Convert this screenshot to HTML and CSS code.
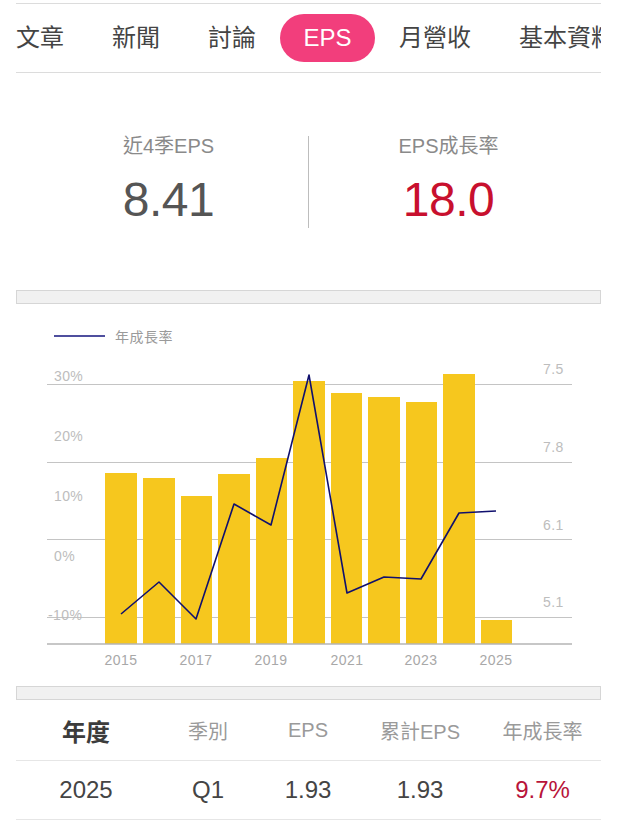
FILE: index.html
```html
<!DOCTYPE html>
<html lang="zh-Hant">
<head>
<meta charset="utf-8">
<title>EPS</title>
<link rel="stylesheet" href="styles.css">
</head>
<body>
<div class="page">
  <nav class="tabs">
    <div class="tab-track">
      <span class="tab">文章</span>
      <span class="tab">新聞</span>
      <span class="tab">討論</span>
      <span class="tab active">EPS</span>
      <span class="tab">月營收</span>
      <span class="tab">基本資料</span>
    </div>
  </nav>

  <section class="stats">
    <div class="stat">
      <div class="stat-label">近4季EPS</div>
      <div class="stat-value">8.41</div>
    </div>
    <div class="stat-divider"></div>
    <div class="stat">
      <div class="stat-label">EPS成長率</div>
      <div class="stat-value up">18.0</div>
    </div>
  </section>

  <div class="band"></div>

  <div class="chart">
    <svg width="585" height="382" viewBox="16 305 585 382" xmlns="http://www.w3.org/2000/svg">
      <g class="legend">
        <line x1="54" y1="337" x2="105" y2="337" stroke="#14147e" stroke-width="1.6"/>
        <text x="115" y="343" class="legend-text">年成長率</text>
      </g>
      <g stroke="#c4c4c4" stroke-width="1">
        <line x1="47" y1="385.5" x2="572" y2="385.5"/>
        <line x1="47" y1="463.5" x2="572" y2="463.5"/>
        <line x1="47" y1="540.5" x2="572" y2="540.5"/>
        <line x1="47" y1="618.5" x2="572" y2="618.5"/>
      </g>
      <g fill="#f6c71e">
        <rect x="105" y="474" width="32" height="171"/>
        <rect x="143" y="479" width="32" height="166"/>
        <rect x="181" y="497" width="31" height="148"/>
        <rect x="218" y="475" width="32" height="170"/>
        <rect x="256" y="459" width="31" height="186"/>
        <rect x="293" y="382" width="32" height="263"/>
        <rect x="331" y="394" width="31" height="251"/>
        <rect x="368" y="398" width="32" height="247"/>
        <rect x="406" y="403" width="31" height="242"/>
        <rect x="443" y="375" width="32" height="270"/>
        <rect x="481" y="621" width="31" height="24"/>
      </g>
      <line x1="47" y1="645" x2="572" y2="645" stroke="#b4b4b4" stroke-width="1.5"/>
      <polyline fill="none" stroke="#10106e" stroke-width="1.6" stroke-linejoin="round"
        points="121,615 159,583 196,620 234,505 271,526 309,376 347,594 384,578 421,580 459,514 496,512"/>
      <g class="axis-y">
        <text x="54" y="382">30%</text>
        <text x="54" y="442">20%</text>
        <text x="54" y="502">10%</text>
        <text x="54" y="562">0%</text>
        <text x="48" y="621">-10%</text>
      </g>
      <g class="axis-y">
        <text x="543" y="375">7.5</text>
        <text x="543" y="453">7.8</text>
        <text x="543" y="531">6.1</text>
        <text x="543" y="608">5.1</text>
      </g>
      <g class="axis-x">
        <text x="121" y="666">2015</text>
        <text x="196" y="666">2017</text>
        <text x="271" y="666">2019</text>
        <text x="347" y="666">2021</text>
        <text x="421" y="666">2023</text>
        <text x="496" y="666">2025</text>
      </g>
    </svg>
  </div>

  <div class="band"></div>

  <div class="table">
    <div class="trow thead">
      <div class="cell strong">年度</div>
      <div class="cell">季別</div>
      <div class="cell">EPS</div>
      <div class="cell">累計EPS</div>
      <div class="cell">年成長率</div>
    </div>
    <div class="trow tbody">
      <div class="cell">2025</div>
      <div class="cell">Q1</div>
      <div class="cell">1.93</div>
      <div class="cell">1.93</div>
      <div class="cell up">9.7%</div>
    </div>
  </div>
</div>
</body>
</html>
```

FILE: styles.css
```css
html, body {
  margin: 0;
  padding: 0;
  background: #ffffff;
}

body {
  font-family: "Liberation Sans", "Noto Sans CJK TC", sans-serif;
  color: #444;
}

.page {
  width: 585px;
  margin-left: 16px;
}

/* tabs */
.tabs {
  margin-top: 3px;
  border-top: 1px solid #dcdcdc;
  border-bottom: 1px solid #dcdcdc;
  padding: 10px 0;
  overflow: hidden;
}

.tab-track {
  display: flex;
  margin-left: -24px;
  white-space: nowrap;
}

.tab {
  flex-shrink: 0;
  height: 48px;
  line-height: 48px;
  padding: 0 24px;
  font-size: 24px;
  color: #444;
  border-radius: 24px;
}

.tab.active {
  background: #f23e7c;
  color: #ffffff;
  padding: 0 23.5px;
}

/* stats */
.stats {
  display: grid;
  grid-template-columns: 1fr 1px 1fr;
  padding: 61px 13px 62px;
}

.stat {
  text-align: center;
}

.stat-label {
  font-size: 20px;
  line-height: 24px;
  color: #8a8a8a;
}

.stat-value {
  margin-top: 14px;
  font-size: 48px;
  line-height: 56px;
  color: #555;
  letter-spacing: -0.5px;
}

.stat-value.up {
  color: #c8102e;
}

.stat-divider {
  background: #bdbdbd;
  margin-top: 2px;
}

/* grey band */
.band {
  height: 12px;
  background: #f1f1f1;
  border: 1px solid #d6d6d6;
}

/* chart */
.chart svg {
  display: block;
}

.legend-text {
  font-family: "Noto Sans CJK TC", sans-serif;
  font-size: 14px;
  fill: #9a9a9a;
  letter-spacing: 0.5px;
}

.axis-y text {
  font-family: "Liberation Sans", sans-serif;
  font-size: 14px;
  fill: #bdbdbd;
  letter-spacing: 0.4px;
}

.axis-x text {
  font-family: "Liberation Sans", sans-serif;
  font-size: 14px;
  fill: #a8a8a8;
  text-anchor: middle;
  letter-spacing: 0.5px;
}

/* table */
.trow {
  display: grid;
  grid-template-columns: 140px 104px 96px 128px 1fr;
  align-items: center;
  border-bottom: 1px solid #e6e6e6;
}

.thead {
  height: 60px;
}

.tbody {
  height: 58px;
}

.cell {
  display: flex;
  justify-content: center;
  white-space: nowrap;
}

.thead .cell {
  font-size: 20px;
  color: #9a9a9a;
}

.thead .cell.strong {
  font-size: 24px;
  font-weight: bold;
  color: #3c3c3c;
}

.tbody .cell {
  font-size: 24px;
  color: #444;
}

.tbody .cell.up {
  color: #b8143a;
}
```
